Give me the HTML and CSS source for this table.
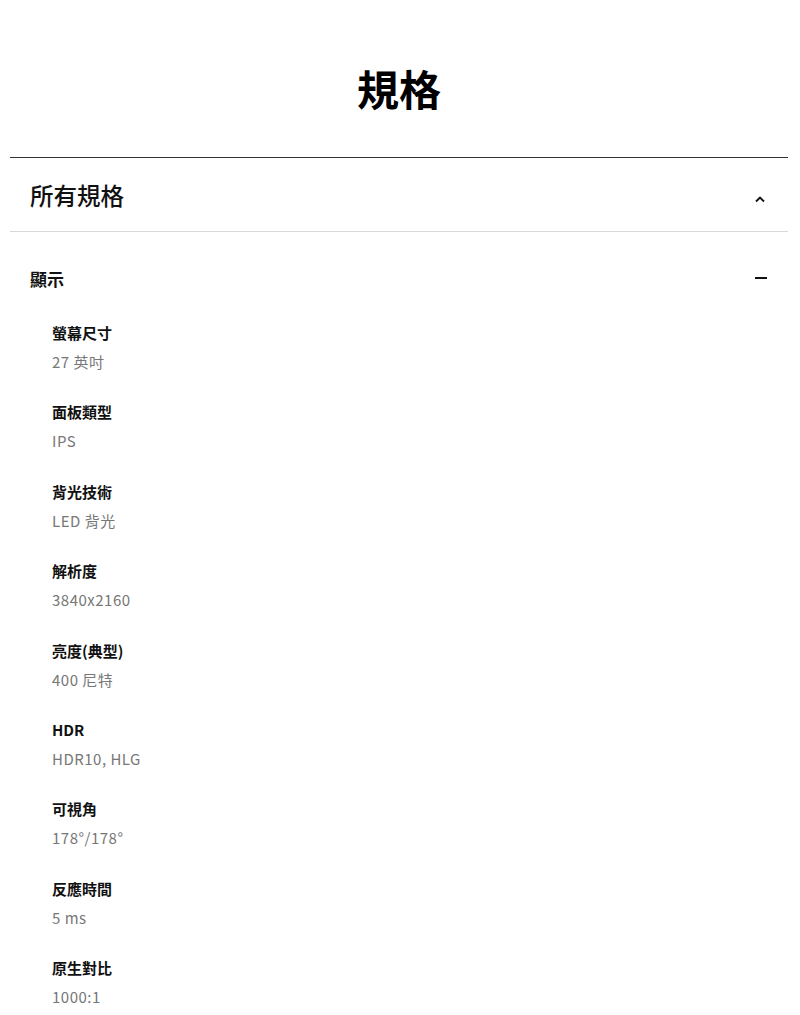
FILE: index.html
```html
<!DOCTYPE html>
<html lang="zh-Hant">
<head>
    <meta charset="UTF-8">
    <meta name="viewport" content="width=device-width, initial-scale=1.0">
    <title>規格</title>
    <link rel="stylesheet" href="styles.css">
</head>
<body>
    <div class="page">
        <header class="page-header">
            <h1>規格</h1>
        </header>

        <div class="accordion">
            <div class="accordion-head">
                <span class="accordion-title">所有規格</span>
                <svg class="chevron" width="12" height="8" viewBox="0 0 12 8">
                    <path d="M2 6.5 L6 2.5 L10 6.5" fill="none" stroke="#111" stroke-width="1.8"/>
                </svg>
            </div>

            <div class="section">
                <div class="section-head">
                    <span class="section-title">顯示</span>
                    <span class="minus"></span>
                </div>
                <div class="spec-list">
                    <div class="spec">
                        <div class="spec-label">螢幕尺寸</div>
                        <div class="spec-value">27 英吋</div>
                    </div>
                    <div class="spec">
                        <div class="spec-label">面板類型</div>
                        <div class="spec-value">IPS</div>
                    </div>
                    <div class="spec">
                        <div class="spec-label">背光技術</div>
                        <div class="spec-value">LED 背光</div>
                    </div>
                    <div class="spec">
                        <div class="spec-label">解析度</div>
                        <div class="spec-value">3840x2160</div>
                    </div>
                    <div class="spec">
                        <div class="spec-label">亮度(典型)</div>
                        <div class="spec-value">400 尼特</div>
                    </div>
                    <div class="spec">
                        <div class="spec-label">HDR</div>
                        <div class="spec-value">HDR10, HLG</div>
                    </div>
                    <div class="spec">
                        <div class="spec-label">可視角</div>
                        <div class="spec-value">178°/178°</div>
                    </div>
                    <div class="spec">
                        <div class="spec-label">反應時間</div>
                        <div class="spec-value">5 ms</div>
                    </div>
                    <div class="spec">
                        <div class="spec-label">原生對比</div>
                        <div class="spec-value">1000:1</div>
                    </div>
                </div>
            </div>
        </div>
    </div>
</body>
</html>
```

FILE: styles.css
```css
body {
    margin: 0;
    background-color: #fff;
    font-family: "Noto Sans CJK TC", "Noto Sans", sans-serif;
    color: #111;
}
.page {
    padding: 0 12px 0 10px;
}
.page-header {
    padding: 58px 0 39px;
    border-bottom: 1px solid #333;
    text-align: center;
}
.page-header h1 {
    margin: 0;
    font-size: 42px;
    line-height: 60px;
    font-weight: 700;
    color: #000;
}
.accordion-head {
    display: flex;
    align-items: center;
    justify-content: space-between;
    height: 73px;
    padding: 0 20px;
    border-bottom: 1px solid #d9d9d9;
}
.accordion-title {
    font-size: 23.5px;
    line-height: 32px;
    font-weight: 500;
}
.chevron {
    margin-top: 8px;
    margin-right: 2px;
}
.section-head {
    display: flex;
    align-items: center;
    justify-content: space-between;
    margin-top: 33px;
    padding: 0 20px;
    height: 26px;
}
.section-title {
    font-size: 17px;
    font-weight: 700;
}
.minus {
    width: 12px;
    height: 2px;
    background-color: #111;
    margin-right: 1px;
}
.spec-list {
    padding: 30px 20px 0 42px;
}
.spec {
    margin-bottom: 26.4px;
}
.spec-label {
    font-size: 15px;
    line-height: 24px;
    font-weight: 700;
}
.spec-value {
    margin-top: 5px;
    font-size: 15px;
    line-height: 24px;
    letter-spacing: 0.5px;
    color: #777;
}
```
